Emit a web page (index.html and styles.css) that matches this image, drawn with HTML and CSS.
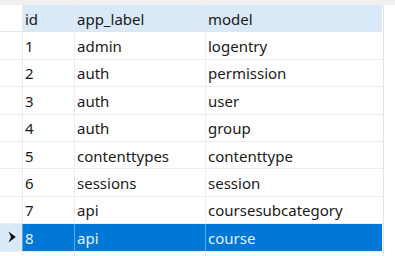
FILE: index.html
```html
<!DOCTYPE html>
<html lang="en">
<head>
    <meta charset="UTF-8">
    <title>django_content_type</title>
    <link rel="stylesheet" href="styles.css">
</head>
<body>
    <div class="toolbar-edge"></div>
    <div class="grid">
        <div class="row head">
            <div class="marker"></div>
            <div class="cell">id</div>
            <div class="cell">app_label</div>
            <div class="cell">model</div>
        </div>
        <div class="row"><div class="marker"></div><div class="cell">1</div><div class="cell">admin</div><div class="cell">logentry</div></div>
        <div class="row"><div class="marker"></div><div class="cell">2</div><div class="cell">auth</div><div class="cell">permission</div></div>
        <div class="row"><div class="marker"></div><div class="cell">3</div><div class="cell">auth</div><div class="cell">user</div></div>
        <div class="row"><div class="marker"></div><div class="cell">4</div><div class="cell">auth</div><div class="cell">group</div></div>
        <div class="row"><div class="marker"></div><div class="cell">5</div><div class="cell">contenttypes</div><div class="cell">contenttype</div></div>
        <div class="row"><div class="marker"></div><div class="cell">6</div><div class="cell">sessions</div><div class="cell">session</div></div>
        <div class="row"><div class="marker"></div><div class="cell">7</div><div class="cell">api</div><div class="cell">coursesubcategory</div></div>
        <div class="row current">
            <div class="marker">
                <svg width="8" height="12" viewBox="0 0 8 12"><path d="M0.5 0.5 L7.8 6 L0.5 11.5 L3 6 Z" fill="#111"/></svg>
            </div>
            <div class="cell">8</div>
            <div class="cell">api</div>
            <div class="cell">course</div>
        </div>
        <div class="row"><div class="marker"></div><div class="cell"></div><div class="cell"></div><div class="cell"></div></div>
    </div>
</body>
</html>
```

FILE: styles.css
```css
html, body {
    height: 256px;
    overflow: hidden;
}
body {
    margin: 0;
    background: #ffffff;
    font-family: "Noto Sans", "Open Sans", sans-serif;
    font-size: 15px;
    color: #1a1a1a;
}
.toolbar-edge {
    height: 5px;
    background: #f0f0f0;
}
.grid {
    width: 383px;
    height: 251px;
    overflow: hidden;
    border-right: 1px solid #e3e3e3;
}
.row {
    display: grid;
    grid-template-columns: 22px 52px 131px 177px;
    height: 27.4px;
    box-sizing: border-box;
    border-bottom: 1px solid #ececec;
}
.cell {
    display: flex;
    align-items: center;
    padding: 1px 0 0 2px;
    border-left: 1px solid #ececec;
    white-space: nowrap;
}
.marker {
    display: flex;
    align-items: center;
    justify-content: center;
    padding-left: 2px;
}
.head .cell {
    background: #d9e9f8;
}
.head {
    border-bottom-color: #e0e6ec;
}
.current .cell {
    background: #0078d7;
    color: #e6f1fb;
    border-left-color: #5aa6e6;
}
.current .marker {
    background: #d9e9f8;
}
```
